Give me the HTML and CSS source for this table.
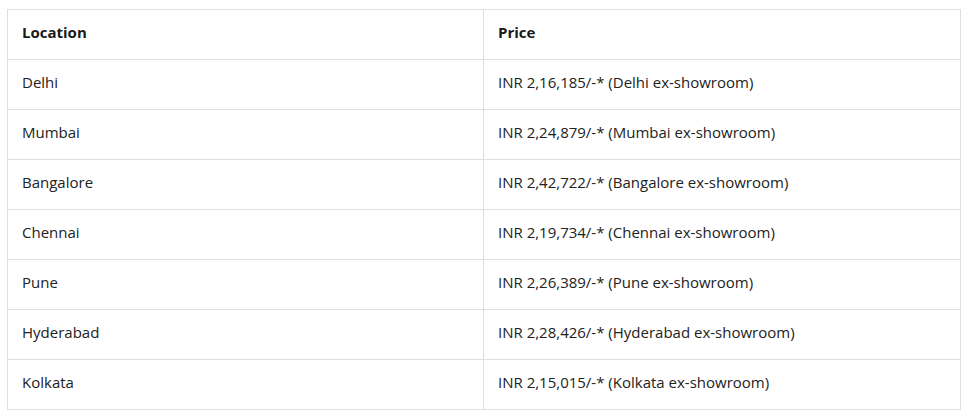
FILE: index.html
```html
<!DOCTYPE html>
<html>
<head>
<meta charset="utf-8">
<link rel="stylesheet" href="styles.css">
</head>
<body>
<table class="prices">
  <thead>
    <tr><th class="col-loc">Location</th><th>Price</th></tr>
  </thead>
  <tbody>
    <tr><td>Delhi</td><td>INR 2,16,185/-* (Delhi ex-showroom)</td></tr>
    <tr><td>Mumbai</td><td>INR 2,24,879/-* (Mumbai ex-showroom)</td></tr>
    <tr><td>Bangalore</td><td>INR 2,42,722/-* (Bangalore ex-showroom)</td></tr>
    <tr><td>Chennai</td><td>INR 2,19,734/-* (Chennai ex-showroom)</td></tr>
    <tr><td>Pune</td><td>INR 2,26,389/-* (Pune ex-showroom)</td></tr>
    <tr><td>Hyderabad</td><td>INR 2,28,426/-* (Hyderabad ex-showroom)</td></tr>
    <tr><td>Kolkata</td><td>INR 2,15,015/-* (Kolkata ex-showroom)</td></tr>
  </tbody>
</table>
</body>
</html>
```
FILE: styles.css
```css
html, body {
  margin: 0;
  padding: 0;
  background: #fff;
}
body {
  padding: 9px 0 0 7px;
  font-family: "Open Sans", "Noto Sans", sans-serif;
  font-size: 15px;
  color: #222;
}
.prices {
  border-collapse: collapse;
  width: 954px;
  table-layout: fixed;
}
.prices th,
.prices td {
  border: 1px solid #dedede;
  height: 50px;
  padding: 0 14px 5px;
  text-align: left;
  vertical-align: middle;
  box-sizing: border-box;
}
.prices th {
  font-weight: 700;
  color: #1a1a1a;
}
.prices .col-loc {
  width: 476px;
}
```
